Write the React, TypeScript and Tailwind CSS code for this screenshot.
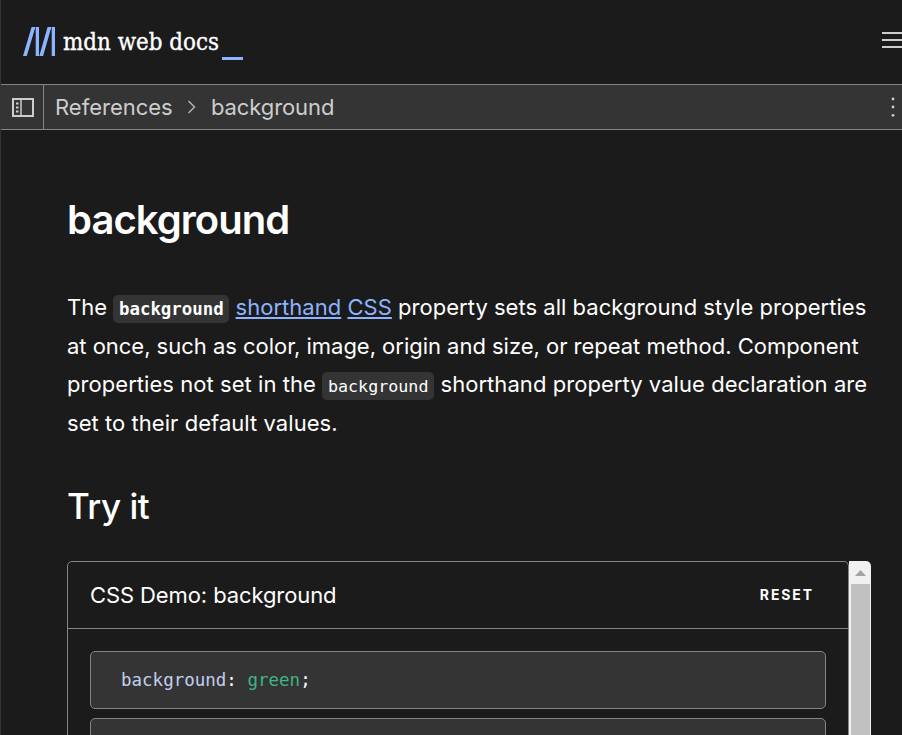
import React from "react";

function Logo() {
  return (
    <svg width="222" height="40" viewBox="0 0 222 40" className="ml-[22px] mt-[24px] shrink-0">
      <g fill="#8cb4ff">
        <path d="M9.6 3H13.4L4.8 32H1z" />
        <path d="M13.7 3H17V32H13.7z" />
        <path d="M25.6 3H29.4L21.1 32H17.3z" />
        <path d="M29.7 3H33V32H29.7z" />
        <path d="M200 33H221V36H200z" />
      </g>
      <text x="41" y="26" textLength="156" lengthAdjust="spacingAndGlyphs" fill="#fff" stroke="#fff" strokeWidth="0.35" fontSize="23.5" fontFamily="'DejaVu Serif', serif">
        mdn web docs
      </text>
    </svg>
  );
}

function Header() {
  return (
    <header className="flex h-[84px] items-start justify-between">
      <Logo />
      <div className="mt-[32px] flex w-[20px] flex-col gap-[5px]">
        <span className="h-[2px] bg-[#cdcdcd]" />
        <span className="h-[2px] bg-[#cdcdcd]" />
        <span className="h-[2px] bg-[#cdcdcd]" />
      </div>
    </header>
  );
}

function Breadcrumbs() {
  return (
    <nav className="flex h-[46px] items-stretch border-y border-[#858585] bg-[#343434] text-[22px] leading-[44px] text-[#cdcdcd]">
      <div className="flex w-[44px] items-center border-r border-[#858585] pl-[12px] pt-px">
        <svg width="22" height="20" viewBox="0 0 22 20" fill="none">
          <rect x="1" y="1" width="20" height="17" stroke="#cdcdcd" strokeWidth="2" />
          <path d="M9 1V18" stroke="#cdcdcd" strokeWidth="1.5" />
          <path d="M4 5.5h2.5M4 9.5h2.5M4 13.5h2.5" stroke="#cdcdcd" strokeWidth="2" />
        </svg>
      </div>
      <span className="ml-[11px] w-[117px] whitespace-nowrap">References</span>
      <svg width="8" height="14" viewBox="0 0 8 14" fill="none" className="ml-[16px] mt-[15px]">
        <path d="M0.5 1L6.5 7L0.5 13" stroke="#b3b3b3" strokeWidth="1.5" />
      </svg>
      <span className="ml-[15px] tracking-[-0.1px]">background</span>
      <svg width="4" height="22" viewBox="0 0 4 22" className="ml-auto mr-[7px] mt-[12px]" fill="#cdcdcd">
        <circle cx="2" cy="2" r="1.4" />
        <circle cx="2" cy="10" r="1.4" />
        <circle cx="2" cy="18.3" r="1.4" />
      </svg>
    </nav>
  );
}

function Code({ bold = false }: { bold?: boolean }) {
  return (
    <code
      className={
        "inline-block h-[28px] rounded-[5px] bg-[#343434] text-center align-baseline font-['DejaVu_Sans_Mono',monospace] leading-[28px] tracking-normal " +
        (bold ? "w-[116px] text-[17.4px] font-bold" : "w-[112px] text-[16.7px]")
      }
    >
      background
    </code>
  );
}

function Demo() {
  return (
    <section className="ml-[67px] mt-[31px] flex h-[174px] w-[804px] overflow-hidden">
      <div className="h-[220px] w-[782px] shrink-0 rounded-[5px] border border-[#858585]">
        <div className="flex h-[67px] items-center justify-between border-b border-[#858585] pl-[22px] pr-[34px]">
          <h3 className="text-[22px] tracking-[-0.1px]">CSS Demo: background</h3>
          <button className="pb-px text-[14px] font-bold tracking-[1.9px]">RESET</button>
        </div>
        <div className="flex flex-col gap-[9px] px-[22px] pt-[22px]">
          <pre className="h-[58px] rounded-[5px] border border-[#858585] bg-[#343434] pl-[30px] font-['DejaVu_Sans_Mono',monospace] text-[17.5px] leading-[56px]">
            <span className="text-[#c1cff1]">background</span>: <span className="text-[#3fb584]">green</span>;
          </pre>
          <div className="h-[58px] rounded-[5px] border border-[#858585] bg-[#343434]" />
        </div>
      </div>
      <div className="flex w-[22px] flex-col overflow-hidden rounded-tr-[5px] bg-[#f1f1f1]">
        <svg width="22" height="23" viewBox="0 0 22 23" className="shrink-0">
          <path d="M6 15L11.5 9L17 15z" fill="#a3a3a3" />
        </svg>
        <div className="ml-[2px] mr-px flex-1 bg-[#c1c1c1]" />
      </div>
    </section>
  );
}

export default function App() {
  return (
    <div className="h-[735px] w-[902px] overflow-hidden border-l border-[#343434] bg-[#1b1b1b] font-[Inter,sans-serif] text-white">
      <div className="-ml-px">
        <Header />
        <Breadcrumbs />
        <main>
          <h1 className="ml-[67px] mt-[60px] h-[60px] text-[40px] font-semibold leading-[60px] tracking-[-0.95px]">background</h1>
          <p className="ml-[67px] mt-[38px] whitespace-nowrap text-[22px] leading-[38.6px]">
            <span className="block h-[38.6px] tracking-[0.025px]">
              The <Code bold /> <a className="text-[#8cb4ff] underline">shorthand</a>{" "}
              <a className="text-[#8cb4ff] underline">CSS</a> property sets all background style properties
            </span>
            <span className="block h-[38.6px] tracking-[-0.025px]">at once, such as color, image, origin and size, or repeat method. Component</span>
            <span className="block h-[38.6px] tracking-[0.055px]">
              properties not set in the <Code /> shorthand property value declaration are
            </span>
            <span className="block h-[38.6px] tracking-[0.05px]">set to their default values.</span>
          </p>
          <h2 className="ml-[67px] mt-[40px] h-[48px] text-[35px] font-medium leading-[48px] tracking-[-0.5px]">Try it</h2>
          <Demo />
        </main>
      </div>
    </div>
  );
}
